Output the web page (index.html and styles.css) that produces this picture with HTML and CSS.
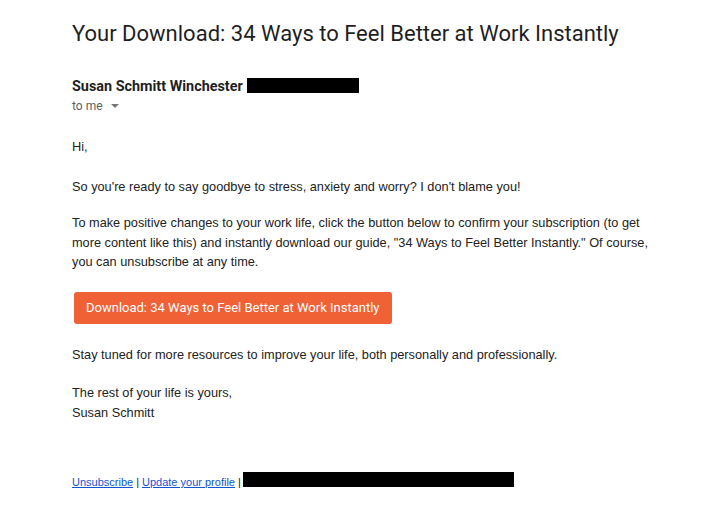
FILE: index.html
```html
<!DOCTYPE html>
<html>
<head>
<meta charset="utf-8">
<link rel="stylesheet" href="styles.css">
</head>
<body>
<div class="page">
  <h1 class="subject">Your Download: 34 Ways to Feel Better at Work Instantly</h1>
  <div class="sender">
    <div class="from"><span class="name">Susan Schmitt Winchester</span><span class="redact redact-email"></span></div>
    <div class="to">to me <span class="caret"></span></div>
  </div>
  <div class="body">
    <p class="greet">Hi,</p>
    <p>So you're ready to say goodbye to stress, anxiety and worry? I don't blame you!</p>
    <p class="last">To make positive changes to your work life, click the button below to confirm your subscription (to get more content like this) and instantly download our guide, "34 Ways to Feel Better Instantly." Of course, you can unsubscribe at any time.</p>
    <div class="cta-row"><a class="cta">Download: 34 Ways to Feel Better at Work Instantly</a></div>
    <p class="stay">Stay tuned for more resources to improve your life, both personally and professionally.</p>
    <p class="sign">The rest of your life is yours,<br>Susan Schmitt</p>
  </div>
  <div class="footer"><a class="link">Unsubscribe</a> | <a class="link">Update your profile</a> | <span class="redact redact-footer"></span></div>
</div>
</body>
</html>
```
FILE: styles.css
```css
html, body {
  margin: 0;
  padding: 0;
  background: #fff;
}
.page {
  padding: 20px 0 0 72px;
  width: 590px;
}
.subject {
  margin: 0;
  font-family: Roboto, "Open Sans", sans-serif;
  font-weight: 400;
  font-size: 22px;
  line-height: 28px;
  color: #1f1f1f;
  white-space: nowrap;
}
.sender {
  margin-top: 28px;
  font-family: Roboto, sans-serif;
}
.from {
  display: flex;
  align-items: center;
  height: 20px;
}
.name {
  font-weight: 700;
  font-size: 14.4px;
  color: #1f1f1f;
}
.redact {
  display: inline-block;
  background: #000;
}
.redact-email {
  width: 112px;
  height: 15px;
  margin-left: 4px;
  margin-top: -2px;
}
.to {
  display: flex;
  align-items: center;
  font-size: 12px;
  color: #5e5e5e;
  height: 20px;
}
.caret {
  display: inline-block;
  margin-left: 8px;
  width: 0;
  height: 0;
  border-left: 4px solid transparent;
  border-right: 4px solid transparent;
  border-top: 4px solid #777;
}
.body {
  margin-top: 21px;
  font-family: "Liberation Sans", Arial, sans-serif;
  font-size: 12.75px;
  line-height: 19.5px;
  color: #222;
}
.body p {
  margin: 0 0 16.5px 0;
}
.body p.greet {
  margin-bottom: 20.5px;
}
.body p.last {
  margin-bottom: 20px;
}
.body p.stay {
  margin-bottom: 19px;
}
.body p.sign {
  margin-bottom: 0;
}
.cta-row {
  margin: 0 0 21px 2px;
}
.cta {
  display: inline-block;
  background: #f06135;
  color: #fff;
  font-family: Roboto, sans-serif;
  font-size: 13px;
  line-height: 32px;
  height: 32px;
  padding: 0 12px;
  border-radius: 3px;
}
.footer {
  margin-top: 54px;
  font-family: "Liberation Sans", Arial, sans-serif;
  font-size: 11px;
  color: #222;
  display: flex;
  align-items: center;
  gap: 3px;
}
.link {
  color: #1155cc;
  text-decoration: underline;
}
.redact-footer {
  width: 271px;
  height: 15px;
  margin-left: -1px;
  margin-top: -6px;
}
```
